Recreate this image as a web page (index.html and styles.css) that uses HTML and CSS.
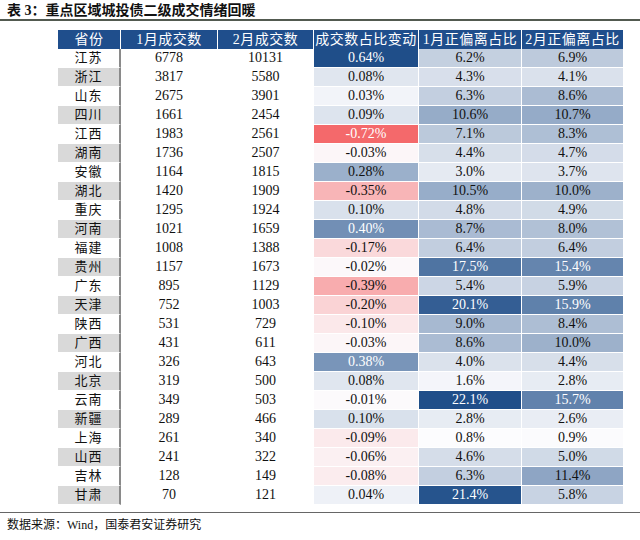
FILE: index.html
```html
<!DOCTYPE html>
<html lang="zh">
<head>
<meta charset="utf-8">
<link rel="stylesheet" href="styles.css">
</head>
<body>
<div class="title">表 3：重点区域城投债二级成交情绪回暖</div>
<table class="data">
<colgroup>
<col class="c1"><col class="c2"><col class="c3"><col class="c4"><col class="c5"><col class="c6">
</colgroup>
<thead>
<tr><th>省份</th><th>1月成交数</th><th>2月成交数</th><th>成交数占比变动</th><th>1月正偏离占比</th><th>2月正偏离占比</th></tr>
</thead>
<tbody>
<tr><td class="prov">江苏</td><td>6778</td><td>10131</td><td class="chg">0.64%</td><td class="dev">6.2%</td><td class="dev">6.9%</td></tr>
<tr><td class="prov">浙江</td><td>3817</td><td>5580</td><td class="chg">0.08%</td><td class="dev">4.3%</td><td class="dev">4.1%</td></tr>
<tr><td class="prov">山东</td><td>2675</td><td>3901</td><td class="chg">0.03%</td><td class="dev">6.3%</td><td class="dev">8.6%</td></tr>
<tr><td class="prov">四川</td><td>1661</td><td>2454</td><td class="chg">0.09%</td><td class="dev">10.6%</td><td class="dev">10.7%</td></tr>
<tr><td class="prov">江西</td><td>1983</td><td>2561</td><td class="chg">-0.72%</td><td class="dev">7.1%</td><td class="dev">8.3%</td></tr>
<tr><td class="prov">湖南</td><td>1736</td><td>2507</td><td class="chg">-0.03%</td><td class="dev">4.4%</td><td class="dev">4.7%</td></tr>
<tr><td class="prov">安徽</td><td>1164</td><td>1815</td><td class="chg">0.28%</td><td class="dev">3.0%</td><td class="dev">3.7%</td></tr>
<tr><td class="prov">湖北</td><td>1420</td><td>1909</td><td class="chg">-0.35%</td><td class="dev">10.5%</td><td class="dev">10.0%</td></tr>
<tr><td class="prov">重庆</td><td>1295</td><td>1924</td><td class="chg">0.10%</td><td class="dev">4.8%</td><td class="dev">4.9%</td></tr>
<tr><td class="prov">河南</td><td>1021</td><td>1659</td><td class="chg">0.40%</td><td class="dev">8.7%</td><td class="dev">8.0%</td></tr>
<tr><td class="prov">福建</td><td>1008</td><td>1388</td><td class="chg">-0.17%</td><td class="dev">6.4%</td><td class="dev">6.4%</td></tr>
<tr><td class="prov">贵州</td><td>1157</td><td>1673</td><td class="chg">-0.02%</td><td class="dev">17.5%</td><td class="dev">15.4%</td></tr>
<tr><td class="prov">广东</td><td>895</td><td>1129</td><td class="chg">-0.39%</td><td class="dev">5.4%</td><td class="dev">5.9%</td></tr>
<tr><td class="prov">天津</td><td>752</td><td>1003</td><td class="chg">-0.20%</td><td class="dev">20.1%</td><td class="dev">15.9%</td></tr>
<tr><td class="prov">陕西</td><td>531</td><td>729</td><td class="chg">-0.10%</td><td class="dev">9.0%</td><td class="dev">8.4%</td></tr>
<tr><td class="prov">广西</td><td>431</td><td>611</td><td class="chg">-0.03%</td><td class="dev">8.6%</td><td class="dev">10.0%</td></tr>
<tr><td class="prov">河北</td><td>326</td><td>643</td><td class="chg">0.38%</td><td class="dev">4.0%</td><td class="dev">4.4%</td></tr>
<tr><td class="prov">北京</td><td>319</td><td>500</td><td class="chg">0.08%</td><td class="dev">1.6%</td><td class="dev">2.8%</td></tr>
<tr><td class="prov">云南</td><td>349</td><td>503</td><td class="chg">-0.01%</td><td class="dev">22.1%</td><td class="dev">15.7%</td></tr>
<tr><td class="prov">新疆</td><td>289</td><td>466</td><td class="chg">0.10%</td><td class="dev">2.8%</td><td class="dev">2.6%</td></tr>
<tr><td class="prov">上海</td><td>261</td><td>340</td><td class="chg">-0.09%</td><td class="dev">0.8%</td><td class="dev">0.9%</td></tr>
<tr><td class="prov">山西</td><td>241</td><td>322</td><td class="chg">-0.06%</td><td class="dev">4.6%</td><td class="dev">5.0%</td></tr>
<tr><td class="prov">吉林</td><td>128</td><td>149</td><td class="chg">-0.08%</td><td class="dev">6.3%</td><td class="dev">11.4%</td></tr>
<tr><td class="prov">甘肃</td><td>70</td><td>121</td><td class="chg">0.04%</td><td class="dev">21.4%</td><td class="dev">5.8%</td></tr>
</tbody>
</table>
<div class="source">数据来源：Wind，国泰君安证券研究</div>
<script src="script.js"></script>
</body>
</html>
```
FILE: styles.css
```css
body {
  margin: 0;
  background: #fff;
  color: #111;
  font-family: "Liberation Serif", "Noto Sans CJK SC", serif;
}
.title {
  height: 17px;
  padding-top: 2px;
  padding-left: 7px;
  line-height: 17px;
  font-size: 14px;
  font-weight: bold;
  border-bottom: 2px solid #525a50;
}
.data {
  margin: 9px 0 0 58px;
  width: 565px;
  table-layout: fixed;
  border-collapse: separate;
  border-spacing: 0;
}
.c1 { width: 63px; }
.c2 { width: 97px; }
.c3 { width: 96px; }
.c4 { width: 105px; }
.c5 { width: 103px; }
.c6 { width: 101px; }
.data th {
  height: 18px;
  padding: 0;
  background: #1f4e8c;
  color: #fff;
  font-weight: normal;
  font-size: 14px;
  line-height: 18px;
  letter-spacing: 0.5px;
  border-right: 1px solid #fff;
  box-sizing: border-box;
}
.data th:last-child { border-right: 0; }
.data tr { height: 19px; }
.data td {
  padding: 0;
  text-align: center;
  font-size: 14px;
  line-height: 18px;
  border-right: 1px solid #fff;
  border-bottom: 1px solid #fff;
  box-sizing: border-box;
}
.data td:last-child { border-right: 0; }
.data td.prov {
  font-size: 13px;
  letter-spacing: 1px;
  border-right: 2px solid #8a8a8a;
}
.data tbody tr:nth-child(even) td.prov { background: #d9d9d9; }
.source {
  margin-top: 7px;
  padding-left: 7px;
  padding-top: 4px;
  line-height: 16px;
  font-size: 12px;
  border-top: 1.5px solid #666;
}
```
FILE: script.js
```js
(function () {
  var white = [252, 252, 254];
  var blue = [31, 78, 137];
  var red = [244, 105, 107];
  function mix(a, b, t) {
    t = Math.max(0, Math.min(1, t));
    return 'rgb(' + a.map(function (v, i) { return Math.round(v + (b[i] - v) * t); }).join(',') + ')';
  }
  function paint(td, col, t) {
    td.style.background = mix(white, col, t);
    if (t > 0.55) td.style.color = '#fff';
  }
  document.querySelectorAll('td.chg').forEach(function (td) {
    var v = parseFloat(td.textContent);
    if (v >= 0) paint(td, blue, v / 0.64);
    else paint(td, red, -v / 0.72);
  });
  document.querySelectorAll('td.dev').forEach(function (td) {
    var v = parseFloat(td.textContent);
    paint(td, blue, (v - 0.8) / (22.1 - 0.8));
  });
})();
```
